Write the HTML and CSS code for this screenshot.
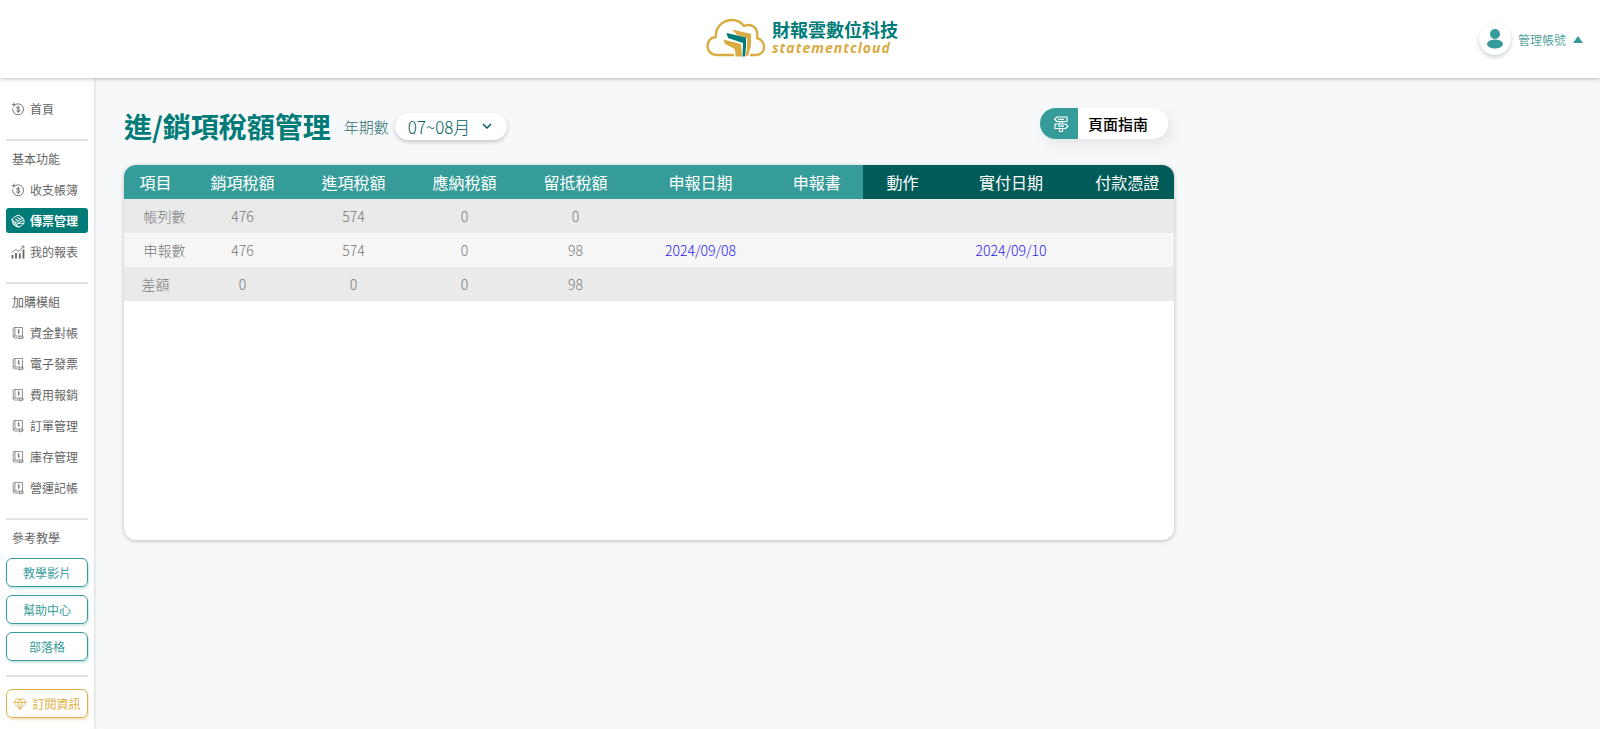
FILE: index.html
```html
<!DOCTYPE html>
<html lang="zh-Hant">
<head>
<meta charset="utf-8">
<title>進/銷項稅額管理</title>
<link rel="stylesheet" href="styles.css">
</head>
<body>
<svg class="sprite" aria-hidden="true">
  <symbol id="coin" viewBox="0 0 14 14"><g fill="none" stroke="currentColor" stroke-width=".9" stroke-linecap="round"><path d="M5.500 2A5.500 5.500 0 1 1 1.600 6.800M3 1v3.400M1.300 2.700h3.400"/><path d="M9 5.800C8.600 4.800 5.600 4.600 5.600 6S9 7.100 9 8.500 6 9.800 5.400 8.800M7.300 4.300v6.200"/></g></symbol>
  <symbol id="voucher" viewBox="0 0 14 14"><g fill="none" stroke="currentColor" stroke-linejoin="round"><path d="M.8 5.500C2.500 3.500 5.500 1.200 8 1.200L12 4.200C13.500 6 13 8.500 12.800 9.500L8.500 13C6 13 3.500 12 2.300 10z"/><path d="M.8 5.500 5 8.500C7 6.500 9.500 4.800 12 4.200M1.500 7.700 5.500 10.300C7.500 8.500 10 7 12.600 6.500M2.300 10 8.500 13M5.500 10.300C8 9.200 10 9 12.800 9.500M4 4.700l3.500 2.200M6 3.200l3.500 2"/></g></symbol>
  <symbol id="chart" viewBox="0 0 14 14"><path d="M1.500 10V13.500M5 8V13.500M8.800 8.500V13.500M12.500 4.500V13.500" fill="none" stroke="currentColor" stroke-width="1.800"/><path d="M.5 7.500 4.800 4.500 8 6.300 12.500 1.500M10.500 1.200h2.300v2.200" fill="none" stroke="currentColor" stroke-width=".8"/></symbol>
  <symbol id="book" viewBox="0 0 14 14"><g fill="none" stroke="currentColor" stroke-width=".7"><path d="M4 10V1.500H11.500V10M4 1.500C2.200 1.500 2.200 2.300 2.200 3V10.500C2.200 11.600 2.800 12 4 12H8M2.200 10.500C2.600 10 3.200 10 4 10H12M8.500 10V13L9.800 12.200 11 13V10M12 10V12H11"/><path d="M8.700 4.200C7.900 3.700 6.900 4 7 4.800S8.600 5.400 8.500 6.200 7.200 7 6.700 6.500M7.700 3.200v4.500"/></g></symbol>
</svg>

<header class="topbar">
  <a class="brand" href="#">
    <svg class="brand-mark" viewBox="0 0 60 40" aria-hidden="true">
      <path d="M27 37H11C-1 37-2 20 10 19 9 8 18 2 26 2 31 2 35 4 38 8 46 5 53 10 51 20 61 23 60 37 50 37H45" fill="none" stroke="#d9ab42" stroke-width="2.400" stroke-linecap="round" stroke-linejoin="round"/>
      <path d="M26 11.500 45 16V28L42 38H39.500L41 30V20L31 17z" fill="#d9ab42"/>
      <path d="M20.500 15 40 19.500V29L39 38.500H36.500L37 25 22 20z" fill="#007b78"/>
      <path d="M17.500 21.500 35 26 36 38.500H29.500C29.500 33 29 31 27 30L19 26z" fill="#d9ab42"/>
    </svg>
    <span class="brand-text"><span class="brand-zh">財報雲數位科技</span><span class="brand-en">statementcloud</span></span>
  </a>
  <button class="account" type="button">
    <span class="avatar"><svg viewBox="0 0 18 20" aria-hidden="true"><circle cx="9" cy="5" r="5"/><ellipse cx="9" cy="15" rx="8" ry="4.500"/></svg></span>
    <span>管理帳號</span><span class="caret"></span>
  </button>
</header>

<div class="shell">
  <nav class="sidebar" aria-label="主選單">
    <div class="group"><a class="item" href="#"><svg><use href="#coin"/></svg>首頁</a></div>
    <div class="group">
      <h2>基本功能</h2>
      <a class="item" href="#"><svg><use href="#coin"/></svg>收支帳簿</a>
      <a class="item active" href="#" aria-current="page"><svg><use href="#voucher"/></svg>傳票管理</a>
      <a class="item" href="#"><svg><use href="#chart"/></svg>我的報表</a>
    </div>
    <div class="group">
      <h2>加購模組</h2>
      <a class="item" href="#"><svg><use href="#book"/></svg>資金對帳</a>
      <a class="item" href="#"><svg><use href="#book"/></svg>電子發票</a>
      <a class="item" href="#"><svg><use href="#book"/></svg>費用報銷</a>
      <a class="item" href="#"><svg><use href="#book"/></svg>訂單管理</a>
      <a class="item" href="#"><svg><use href="#book"/></svg>庫存管理</a>
      <a class="item" href="#"><svg><use href="#book"/></svg>營運記帳</a>
    </div>
    <div class="group links">
      <h2>參考教學</h2>
      <a class="pill" href="#">教學影片</a>
      <a class="pill" href="#">幫助中心</a>
      <a class="pill" href="#">部落格</a>
    </div>
    <div class="group plan">
      <a class="pill gold" href="#"><svg viewBox="0 0 14 14" aria-hidden="true"><path d="M3.500 2h7L13 5.500 7 12.500 1 5.500zM1 5.500h12M5 5.500 7 12.500 9 5.500M5 5.500 7 2 9 5.500" fill="none" stroke="currentColor" stroke-width=".8" stroke-linejoin="round"/></svg>訂閱資訊</a>
    </div>
  </nav>

  <main class="content">
    <div class="heading">
      <h1>進/銷項稅額管理</h1>
      <label for="period">年期數</label>
      <span class="select">
        <select id="period"><option>07~08月</option></select>
        <svg viewBox="0 0 10 6" aria-hidden="true"><path d="M1 1 5 5 9 1" fill="none" stroke="currentColor" stroke-width="1.500"/></svg>
      </span>
      <button class="guide" type="button">
        <span class="guide-icon"><svg viewBox="0 0 16 18" aria-hidden="true"><g fill="none" stroke="currentColor" stroke-width="1.200" stroke-linejoin="round"><path d="M4 2H14V6.500H4L1.500 4.300zM2 9H12.500L15 11.200 12.500 13.500H2zM6.500 6.500V9M9.500 6.500V9M6.500 13.500V16.500H9.500V13.500M5 4.300H11M5 11.200H11"/></g></svg></span>
        <span class="guide-label">頁面指南</span>
      </button>
    </div>
    <section class="card">
      <table>
        <colgroup><col class="c-item"><col class="c-tax"><col class="c-tax"><col class="c-tax"><col class="c-tax"><col class="c-date"><col class="c-doc"><col class="c-action"><col class="c-date"><col class="c-doc"></colgroup>
        <thead><tr><th>項目</th><th>銷項稅額</th><th>進項稅額</th><th>應納稅額</th><th>留抵稅額</th><th>申報日期</th><th>申報書</th><th class="pay">動作</th><th class="pay">實付日期</th><th class="pay">付款憑證</th></tr></thead>
        <tbody>
          <tr><th class="sub">帳列數</th><td>476</td><td>574</td><td>0</td><td>0</td><td></td><td></td><td></td><td></td><td></td></tr>
          <tr><th class="sub">申報數</th><td>476</td><td>574</td><td>0</td><td>98</td><td><a href="#">2024/09/08</a></td><td></td><td></td><td><a href="#">2024/09/10</a></td><td></td></tr>
          <tr><th>差額</th><td>0</td><td>0</td><td>0</td><td>98</td><td></td><td></td><td></td><td></td><td></td></tr>
        </tbody>
      </table>
    </section>
  </main>
</div>
</body>
</html>
```
FILE: styles.css
```css
* { box-sizing: border-box; }
body {
  margin: 0;
  min-height: 100vh;
  display: flex;
  flex-direction: column;
  background: #f6f8fa;
  color: #666;
  font-family: "Noto Sans CJK TC", sans-serif;
  font-size: 14px;
  font-weight: 300;
}
a { color: inherit; text-decoration: none; }
button, select { font: inherit; color: inherit; border: 0; background: none; padding: 0; }
h1, h2 { margin: 0; }
.sprite { position: absolute; width: 0; height: 0; }

.topbar {
  display: grid;
  grid-template-columns: 1fr auto 1fr;
  align-items: center;
  height: 78px;
  padding: 0 17px;
  background: #fff;
  box-shadow: 0 1px 4px rgba(0, 0, 0, .25);
  z-index: 1;
}
.brand { grid-column: 2; display: flex; align-items: center; gap: 6px; padding: 0 0 2px 4px; }
.brand-mark { width: 60px; height: 40px; }
.brand-text { display: flex; flex-direction: column; }
.brand-zh { color: #007b78; font-size: 18px; line-height: 20px; font-weight: 700; }
.brand-en { color: #d9ab42; font: italic 700 14px/18px "Open Sans", sans-serif; letter-spacing: 1px; }
.account {
  justify-self: end;
  display: flex;
  align-items: center;
  gap: 7px;
  color: #007b78;
  font-size: 12px;
}
.avatar {
  display: grid;
  place-items: center;
  width: 32px;
  height: 32px;
  border-radius: 50%;
  box-shadow: 0 2px 4px rgba(0, 0, 0, .2);
}
.avatar svg { width: 18px; height: 20px; fill: #369c9a; }
.caret { border: 5px solid transparent; border-top: 0; border-bottom: 7px solid #369c9a; }

.shell { display: flex; flex: 1; }
.sidebar {
  width: 94px;
  padding: 18px 6px 11px;
  background: #fff;
  box-shadow: 1px 0 3px rgba(0, 0, 0, .12);
  font-size: 12px;
  font-weight: 400;
}
.group { display: flex; flex-direction: column; gap: 6px; }
.group + .group { margin-top: 18px; padding-top: 5px; border-top: 2px solid #e2e2e2; }
.group h2 { padding-left: 6px; font-size: 12px; font-weight: 400; line-height: 25px; }
.item { display: flex; align-items: center; gap: 5px; height: 25px; padding-left: 5px; border-radius: 3px; white-space: nowrap; }
.item svg, .gold svg { width: 14px; height: 14px; flex: none; }
.active { background: #007b78; color: #fff; font-weight: 700; }
.links { gap: 8px; }
.pill {
  display: flex;
  align-items: center;
  justify-content: center;
  gap: 5px;
  height: 29px;
  border: 1px solid #369c9a;
  border-radius: 6px;
  box-shadow: 1px 2px 2px rgba(54, 156, 154, .25);
  color: #369c9a;
  white-space: nowrap;
}
.group + .plan { margin-top: 14px; padding-top: 12px; }
.gold { border-color: #dfb04a; color: #dfac3c; box-shadow: 1px 2px 2px rgba(223, 176, 74, .3); }

.content { flex: 1; max-width: 1110px; padding: 30px; }
.heading { display: flex; align-items: center; height: 36px; margin-bottom: 21px; }
h1 { margin-right: 13px; color: #007b78; font-size: 28px; font-weight: 700; }
.heading label { margin-right: 6px; color: #2f6f6d; font-size: 15px; }
.select {
  display: flex;
  align-items: center;
  height: 27px;
  border-radius: 14px;
  background: #fff;
  box-shadow: 0 2px 4px rgba(0, 0, 0, .2);
  color: #00605e;
}
.select select { appearance: none; padding: 0 32px 0 13px; width: 112px; height: 27px; font-size: 17px; }
.select svg { width: 10px; height: 6px; margin-left: -25px; margin-right: 15px; pointer-events: none; }
.guide {
  display: flex;
  align-self: flex-start;
  margin: 0 6px 0 auto;
  height: 31px;
  border-radius: 16px;
  overflow: hidden;
  background: #fff;
  box-shadow: 4px 6px 14px rgba(0, 0, 0, .08);
}
.guide-icon { display: grid; place-items: center; width: 38px; padding-left: 4px; height: 31px; background: #369c9a; color: #fff; }
.guide-icon svg { width: 16px; height: 18px; }
.guide-label { padding: 0 20px 0 10px; color: #000; font-size: 15px; line-height: 31px; font-weight: 500; }

.card {
  min-height: 375px;
  border-radius: 12px;
  overflow: hidden;
  background: #fff;
  box-shadow: 0 1px 4px rgba(0, 0, 0, .25);
}
table { width: 100%; table-layout: fixed; border-collapse: collapse; text-align: center; }
.c-item { width: 6%; }
.c-tax { width: 10.57%; }
.c-date { width: 13.24%; }
.c-doc { width: 8.9%; }
.c-action { width: 7.43%; }
th, td { height: 34px; padding: 0; }
thead th { background: #369c9a; color: #fff; font-size: 16px; font-weight: 400; white-space: nowrap; }
thead .pay { background: #005b59; }
tbody { color: #777; }
tbody tr { background: #f6f6f6; }
tbody tr:nth-child(odd) { background: #eaeaea; }
tbody th { font-weight: 300; }
tbody .sub { padding-left: 18px; }
tbody a { color: #2a20f0; }
```
